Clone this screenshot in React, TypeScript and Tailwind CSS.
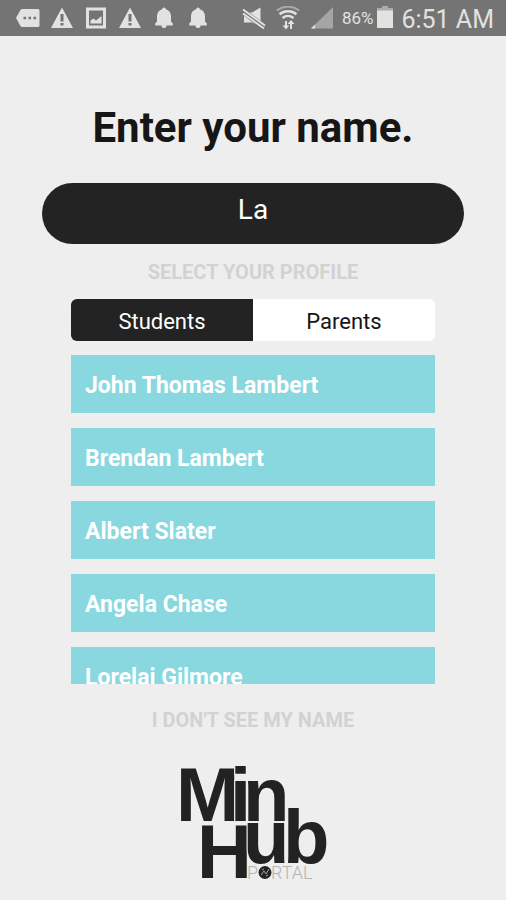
import React, { useState } from 'react';

type Tab = 'students' | 'parents';

const PROFILES: Record<Tab, string[]> = {
  students: ['John Thomas Lambert', 'Brendan Lambert', 'Albert Slater', 'Angela Chase', 'Lorelai Gilmore'],
  parents: ['Susan Lambert', 'Patty Chase'],
};

function TagIcon() {
  return (
    <svg viewBox="0 0 24 24" className="size-6 shrink-0" fill="currentColor">
      <path
        fillRule="evenodd"
        d="M6.500 3H22a1.500 1.500 0 0 1 1.500 1.500v15a1.500 1.500 0 0 1-1.500 1.500H6.500c-1 0-1.700-.4-2.200-1.200L0 12l4.300-7.800C4.800 3.400 5.500 3 6.500 3zM7.500 10.700v2.600h2.600v-2.600zm5 0v2.600h2.600v-2.600zm5 0v2.600h2.600v-2.600z"
      />
    </svg>
  );
}

function WarningIcon() {
  return (
    <svg viewBox="0 0 24 24" className="size-6 shrink-0" fill="currentColor">
      <path fillRule="evenodd" d="M12 1.500 23 22H1zM10.500 8v7.500h3V8zm0 9v2.500h3V17z" />
    </svg>
  );
}

function PictureIcon() {
  return (
    <svg viewBox="0 0 24 24" className="size-6 shrink-0" fill="currentColor">
      <path
        fillRule="evenodd"
        d="M2 1.500h20v21H2zm3 3v15h14v-15zM6.500 17.500v-3l3-2 2.500 2 5.500-4.500v7.500z"
      />
    </svg>
  );
}

function BellIcon() {
  return (
    <svg viewBox="0 0 24 24" className="size-6 shrink-0" fill="currentColor">
      <path d="M10.200 3.200a1.800 1.800 0 0 1 3.600 0c3.300.8 5.200 3.500 5.200 7v5.300l1.800 2V19.500h-6.300a2.500 2.500 0 0 1-5 0H3.200V17.500l1.800-2v-5.300c0-3.500 1.900-6.200 5.200-7z" />
    </svg>
  );
}

function MuteIcon() {
  return (
    <svg viewBox="0 0 24 24" className="size-6 shrink-0">
      <path d="M2 6.500h8l8.500-5V21L10 16.500H2z" fill="currentColor" />
      <path d="M0 4.500 23 22" stroke="#747474" strokeWidth="6" />
      <path d="M1 3.500 23 19.500" stroke="currentColor" strokeWidth="2" />
      <path d="M1 7.500 22 22.500" stroke="currentColor" strokeWidth="2" />
    </svg>
  );
}

function WifiIcon() {
  return (
    <svg viewBox="0 0 24 24" className="size-6 shrink-0" fill="none" stroke="currentColor">
      <path d="M1 4.500c6-5 16-5 22 0" strokeWidth="2" opacity=".5" />
      <path d="M3.500 8.200c5-4 12-4 17 0" strokeWidth="2.400" />
      <path d="M6.500 12c3.500-2.700 7.500-2.700 11 0" strokeWidth="2.400" />
      <path d="M10 21v-6M15 16v7" strokeWidth="2" />
      <path d="m6.500 19.500 3.500 4 3.200-4zM11.500 18l3.500-4 3.500 4z" fill="currentColor" stroke="none" />
    </svg>
  );
}

function SignalIcon() {
  return (
    <svg viewBox="0 0 24 24" className="size-6 shrink-0" fill="currentColor">
      <path d="M23 1v21.500H1z" opacity=".45" />
      <path d="M5 18.500v4H1z" />
    </svg>
  );
}

function BatteryIcon() {
  return (
    <svg viewBox="0 0 16 24" className="h-6 w-4 shrink-0" fill="currentColor">
      <path d="M5 0h6v2h5v3H0V2h5z" opacity=".5" />
      <path d="M0 4.500h16V22H0z" />
    </svg>
  );
}

function StatusBar() {
  return (
    <header className="flex h-9 items-center justify-between bg-[#747474] pl-4 pr-3 text-[#e2e2e2]">
      <div className="flex items-center gap-[10px]">
        <TagIcon />
        <WarningIcon />
        <PictureIcon />
        <WarningIcon />
        <BellIcon />
        <BellIcon />
      </div>
      <div className="flex items-center">
        <div className="flex items-center gap-[10px]">
          <MuteIcon />
          <WifiIcon />
          <SignalIcon />
        </div>
        <span className="ml-2 text-[17px] leading-6">86%</span>
        <span className="ml-1">
          <BatteryIcon />
        </span>
        <span className="ml-2 pt-1 text-[25px] leading-8">6:51 AM</span>
      </div>
    </header>
  );
}

function Logo() {
  return (
    <svg viewBox="0 0 150 116" className="h-[116px] w-[150px] overflow-visible" role="img" aria-label="MinHub Portal">
      {/* Each letter carries a halo in the page colour, so touching letters stay apart */}
      <g
        fill="#222222"
        stroke="#eeeeee"
        strokeWidth="2"
        paintOrder="stroke"
        fontFamily="'Liberation Sans', Arial, sans-serif"
        fontWeight="700"
        fontSize="76"
      >
        <text x="19" y="114">H</text>
        <text x="65" y="99">u</text>
        <text x="105" y="99">b</text>
        <text x="-2" y="57">M</text>
        <text x="52" y="57">i</text>
        <text x="65" y="57">n</text>
      </g>
      <g fill="#b4b4b4" fontFamily="Roboto, sans-serif" fontWeight="300" fontSize="18">
        <text x="69" y="115">P</text>
        <text x="93" y="115">RTAL</text>
      </g>
      <circle cx="87" cy="108.500" r="6.500" fill="#222222" />
      <path d="m83 111 3-4 2 3 3-5M84 106l2-1M88 112l2-1" fill="none" stroke="#a0a0a0" strokeWidth="1" />
    </svg>
  );
}

export default function App() {
  const [name, setName] = useState('La');
  const [tab, setTab] = useState<Tab>('students');

  return (
    <div className="min-h-screen bg-[#eeeeee] font-['Roboto',sans-serif]">
      <StatusBar />

      <main className="flex flex-col items-center pt-16">
        <h1 className="text-[42px] leading-[56px] font-bold text-[#161616]">
          <label htmlFor="name">Enter your name.</label>
        </h1>

        <div className="mt-[27px] w-full px-[42px]">
          <input
            id="name"
            type="text"
            value={name}
            onChange={(e) => setName(e.target.value)}
            className="block h-[61px] w-full rounded-full bg-[#232323] px-8 pb-2 text-center text-[28px] text-white outline-none"
          />
        </div>

        <h2 className="mt-4 text-[20px] leading-6 font-bold text-[#d2d2d2]">SELECT YOUR PROFILE</h2>

        <div className="w-full px-[71px] pt-[15px]">
          {/* Profile type */}
          <div className="flex h-[42px] overflow-hidden rounded-md">
            <button
              onClick={() => setTab('students')}
              className={`flex-1 pt-0.5 text-[22px] ${tab === 'students' ? 'bg-[#232323] text-white' : 'bg-white text-[#161616]'}`}
            >
              Students
            </button>
            <button
              onClick={() => setTab('parents')}
              className={`flex-1 pt-0.5 text-[22px] ${tab === 'parents' ? 'bg-[#232323] text-white' : 'bg-white text-[#161616]'}`}
            >
              Parents
            </button>
          </div>

          {/* Matching profiles */}
          <ul className="mt-[14px] flex h-[329px] flex-col gap-[15px] overflow-y-auto [scrollbar-width:none]">
            {PROFILES[tab].map((profile) => (
              <li key={profile} className="shrink-0">
                <button className="block h-[58px] w-full bg-[#89d8df] px-[14px] pt-1 text-left text-[23px] font-bold text-white">
                  {profile}
                </button>
              </li>
            ))}
          </ul>
        </div>

        <button className="mt-6 text-[20px] leading-6 font-bold text-[#d2d2d2]">I DON'T SEE MY NAME</button>

        <div className="mt-8">
          <Logo />
        </div>
      </main>
    </div>
  );
}
